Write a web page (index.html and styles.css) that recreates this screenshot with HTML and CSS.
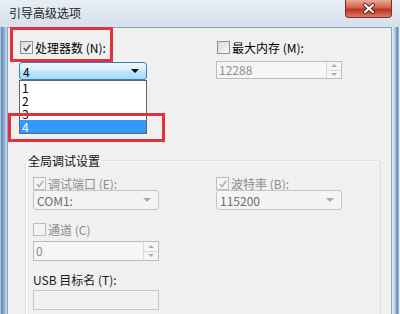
FILE: index.html
```html
<!DOCTYPE html>
<html lang="zh-CN">
<head>
  <meta charset="UTF-8">
  <title>引导高级选项</title>
  <link rel="stylesheet" href="styles.css">
</head>
<body>
  <div class="window">
    <div class="titlebar">
      <span class="title">引导高级选项</span>
      <div class="close">
        <svg width="14" height="11" viewBox="0 0 14 11">
          <path class="x-shadow" d="M3 2 L11 9 M11 2 L3 9"/>
          <path class="x-mark" d="M3 2 L11 9 M11 2 L3 9"/>
        </svg>
      </div>
    </div>
    <div class="body">
      <div class="frame-left"></div>
      <div class="client">
        <div class="top-row">
          <div class="col col-left">
            <label class="check">
              <span class="box"><svg viewBox="0 0 11 11"><path d="M2 5.5 L4.5 8.5 L9 2"/></svg></span>
              处理器数 (N):
            </label>
            <div class="combo-wrap">
              <div class="combo active"><span>4</span><span class="arrow"></span></div>
              <ul class="droplist">
                <li>1</li>
                <li>2</li>
                <li>3</li>
                <li class="sel">4</li>
              </ul>
            </div>
          </div>
          <div class="col col-right">
            <label class="check">
              <span class="box"></span>
              最大内存 (M):
            </label>
            <div class="spin disabled">
              <span>12288</span>
              <span class="spin-btns"><i class="up"></i><i class="down"></i></span>
            </div>
          </div>
        </div>

        <fieldset class="group">
          <legend>全局调试设置</legend>
          <div class="group-cols">
            <div class="gcol">
              <label class="check off">
                <span class="box"><svg viewBox="0 0 11 11"><path d="M2 5.5 L4.5 8.5 L9 2"/></svg></span>
                调试端口 (E):
              </label>
              <div class="combo disabled"><span>COM1:</span><span class="arrow"></span></div>
              <label class="check off gap-top">
                <span class="box"></span>
                通道 (C)
              </label>
              <div class="spin disabled tall">
                <span>0</span>
                <span class="spin-btns"><i class="up"></i><i class="down"></i></span>
              </div>
              <div class="plain-label">USB 目标名 (T):</div>
              <div class="textbox"></div>
            </div>
            <div class="gcol">
              <label class="check off">
                <span class="box"><svg viewBox="0 0 11 11"><path d="M2 5.5 L4.5 8.5 L9 2"/></svg></span>
                波特率 (B):
              </label>
              <div class="combo disabled"><span>115200</span><span class="arrow"></span></div>
            </div>
          </div>
        </fieldset>

        <div class="mark mark-cpu"></div>
        <div class="mark mark-item"></div>
      </div>
      <div class="frame-right"></div>
    </div>
  </div>
</body>
</html>
```

FILE: styles.css
```css
* {
  box-sizing: border-box;
}

body {
  margin: 0;
  font-family: "Noto Sans CJK SC", "Noto Sans", sans-serif;
  font-size: 12px;
  color: #000;
  background: #fff;
}

.window {
  width: 400px;
  height: 314px;
  display: flex;
  flex-direction: column;
  overflow: hidden;
  background: #d3dfeb;
}

/* title bar */
.titlebar {
  height: 27px;
  flex: none;
  display: flex;
  justify-content: space-between;
  align-items: flex-start;
  background: linear-gradient(#e6edf5, #d6e1ec);
}

.title {
  padding: 5px 0 0 9px;
  line-height: 16px;
  color: #1e1e1e;
}

.close {
  width: 47px;
  height: 18px;
  margin-right: 8px;
  border: 1px solid #7d3126;
  border-top: none;
  border-radius: 0 0 4px 4px;
  background: linear-gradient(#eaa996, #d3624b 45%, #bb3421 55%, #d97c62);
  display: flex;
  align-items: center;
  justify-content: center;
}

.x-shadow {
  stroke: #5a2018;
  stroke-width: 4;
  stroke-linecap: round;
  fill: none;
}

.x-mark {
  stroke: #fff;
  stroke-width: 2.2;
  stroke-linecap: round;
  fill: none;
}

.body {
  flex: 1;
  display: flex;
}

.frame-left {
  width: 7px;
  background: linear-gradient(90deg, #c9d8e8, #5f86b4 25%, #8fb0d4 60%, #d0dceb);
}

.frame-right {
  width: 8px;
  background: linear-gradient(90deg, #e8eef5, #c9d8e8 25%, #9dbbdb 45%, #5f86b4 70%, #c3d5e8 88%, #fff);
}

.client {
  flex: 1;
  position: relative;
  background: #f0f0f0;
  border: 1px solid #8ea3bb;
  border-bottom: none;
}

/* top row */
.top-row {
  display: flex;
  gap: 69px;
  padding: 13px 0 0 11px;
}

.col-left {
  width: 128px;
}

.col-right {
  width: 126px;
}

.check {
  display: flex;
  align-items: center;
  gap: 2px;
  height: 13px;
  line-height: 13px;
  margin-left: 1px;
  white-space: nowrap;
}

.check.off {
  color: #8c8c8c;
  margin-left: 0;
}

.box {
  width: 13px;
  height: 13px;
  flex: none;
  border: 1px solid #8e8f8f;
  background: linear-gradient(135deg, #d8d8d8, #fafafa);
  display: flex;
  align-items: center;
  justify-content: center;
}

.box svg {
  width: 10px;
  height: 10px;
}

.box path {
  fill: none;
  stroke: #4d5a6e;
  stroke-width: 1.8;
}

.check.off .box {
  border-color: #bdbdbd;
  background: #f4f4f4;
}

.check.off .box path {
  stroke: #b4b4b4;
}

.combo-wrap {
  position: relative;
  margin-top: 8px;
}

.combo {
  height: 20px;
  display: flex;
  align-items: center;
  justify-content: space-between;
  padding: 0 7px 0 3px;
  border-radius: 3px;
}

.combo.active {
  height: 18px;
  border: 1px solid #3c7fb1;
  background: linear-gradient(#eaf6fd, #d9f0fc 45%, #bee6fd 50%, #a7d9f5);
}

.combo.disabled {
  border: 1px solid #c2c5c8;
  background: #f4f4f4;
  color: #6d6d6d;
}

.arrow {
  width: 0;
  height: 0;
  border-left: 4px solid transparent;
  border-right: 4px solid transparent;
  border-top: 4px solid #000;
}

.combo.disabled .arrow {
  border-top-color: #a9a9a9;
}

.droplist {
  position: absolute;
  top: 100%;
  left: 0;
  right: 0;
  margin: 0;
  padding: 0;
  list-style: none;
  background: #fff;
  border: 1px solid #646464;
  z-index: 2;
}

.droplist li {
  height: 13px;
  line-height: 13px;
  padding-left: 2px;
}

.droplist li.sel {
  background: #3399ff;
  color: #fff;
}

/* spin boxes and text boxes */
.spin {
  height: 18px;
  margin-top: 7px;
  display: flex;
  align-items: stretch;
  justify-content: space-between;
  border: 1px solid #bcbcbc;
  background: #f6f6f6;
  color: #8d8d8d;
  padding-left: 2px;
  line-height: 16px;
}

.spin.tall {
  height: 20px;
  margin-top: 5px;
  line-height: 18px;
}

.spin-btns {
  width: 15px;
  display: flex;
  flex-direction: column;
  border-left: 1px solid #dadada;
}

.spin-btns i {
  flex: 1;
  display: flex;
  align-items: center;
  justify-content: center;
}

.spin-btns i::after {
  content: "";
  border-left: 3px solid transparent;
  border-right: 3px solid transparent;
}

.spin-btns .up {
  border-bottom: 1px solid #dadada;
}

.spin-btns .up::after {
  border-bottom: 3px solid #b0b0b0;
}

.spin-btns .down::after {
  border-top: 3px solid #b0b0b0;
}

.plain-label {
  margin-top: 12px;
  line-height: 14px;
  color: #1a1a1a;
  white-space: nowrap;
}

.textbox {
  height: 20px;
  margin-top: 3px;
  border: 1px solid #c6c6c6;
  background: #f0f0f0;
}

/* group box */
.group {
  margin: 73px 0 0 17px;
  width: 356px;
  padding: 9px 0 12px 7px;
  border: 1px solid #d5dfe5;
  border-radius: 3px;
  box-shadow: inset 1px 1px 0 #fff;
}

.group legend {
  margin-left: -7px;
  padding: 0 2px;
  line-height: 15px;
  color: #111;
}

.group-cols {
  display: flex;
  gap: 57px;
}

.gcol {
  width: 126px;
  display: flex;
  flex-direction: column;
}

.gap-top {
  margin-top: 13px;
}

/* red annotation frames */
.mark {
  position: absolute;
  border: 3px solid #e2323b;
  z-index: 3;
}

.mark-cpu {
  left: 2px;
  top: -1px;
  width: 103px;
  height: 35px;
}

.mark-item {
  left: 0;
  top: 85px;
  width: 157px;
  height: 29px;
}
```
